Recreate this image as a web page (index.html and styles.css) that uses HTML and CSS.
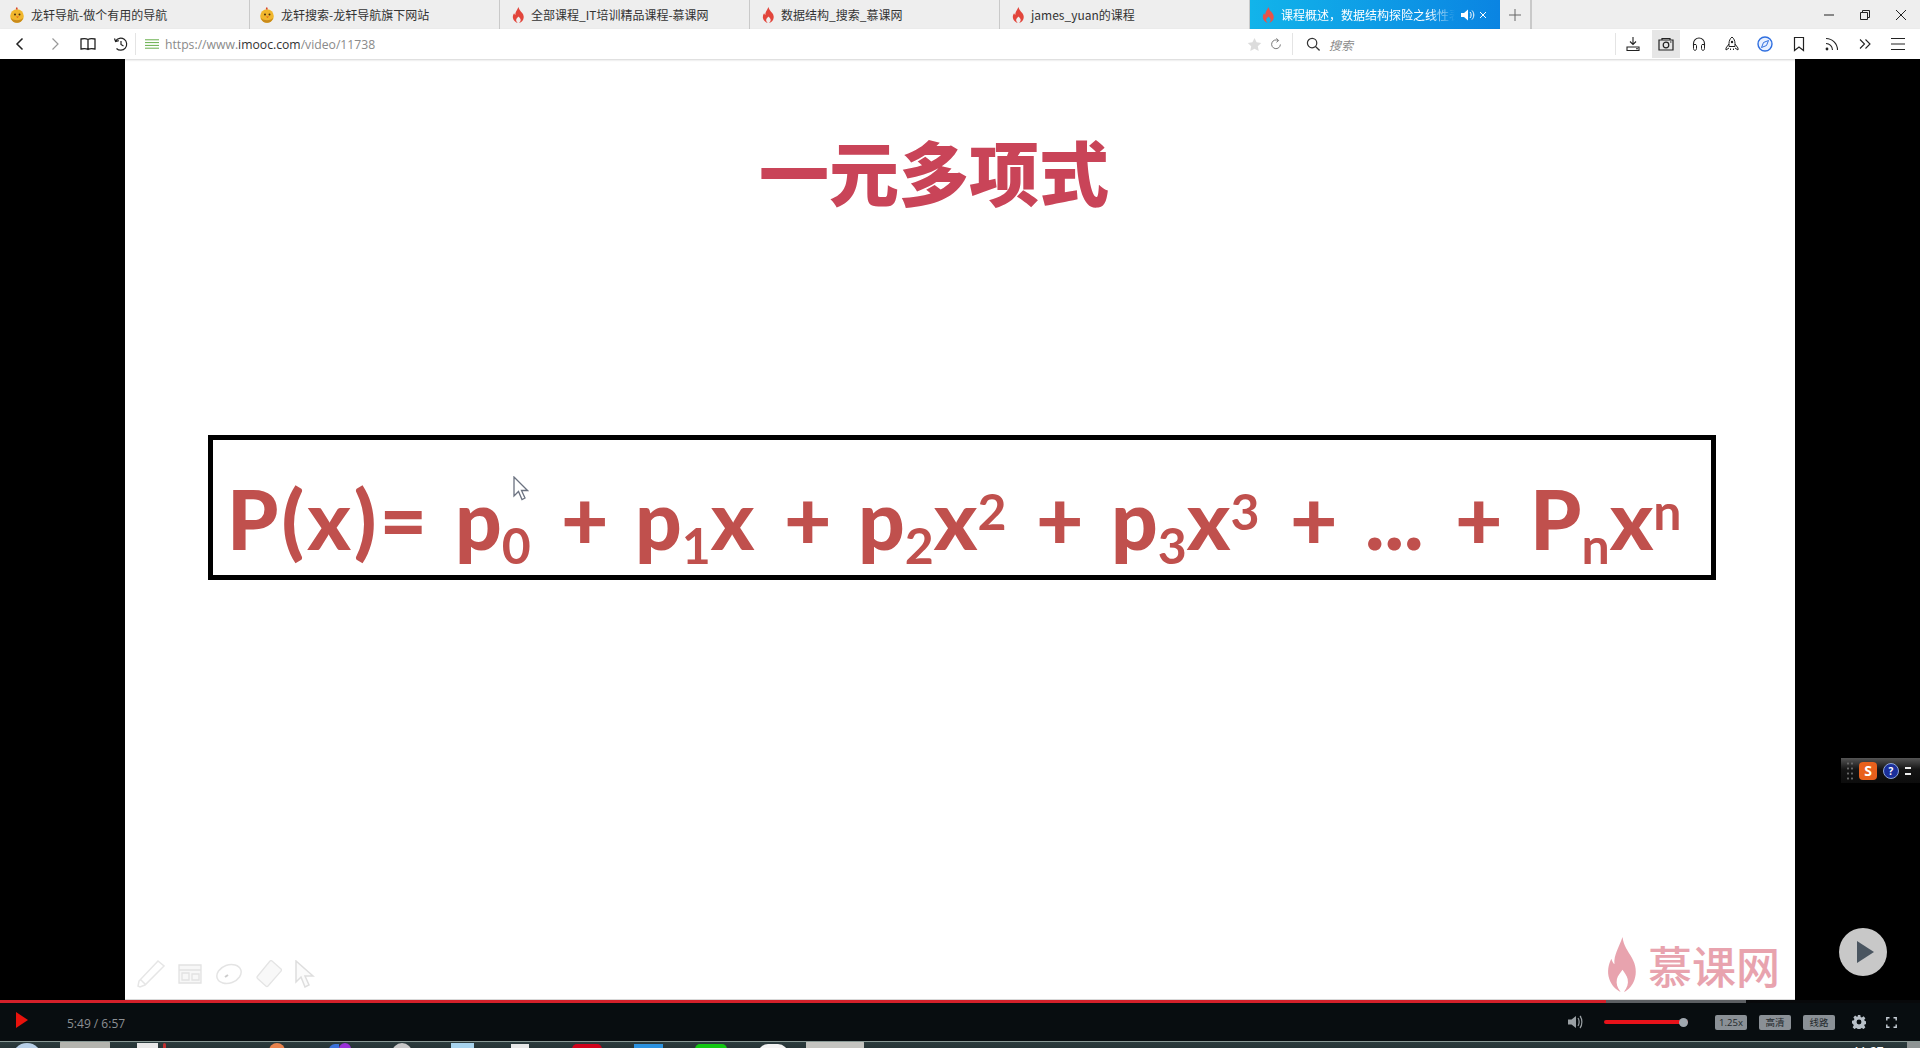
FILE: index.html
```html
<!DOCTYPE html>
<html lang="zh">
<head>
<meta charset="utf-8">
<title>课程概述</title>
<link rel="stylesheet" href="styles.css">
</head>
<body>
<svg class="defs" width="0" height="0">
  <symbol id="flame" viewBox="0 0 16 20" preserveAspectRatio="none"><path fill-rule="evenodd" d="M8 0c.6 3.4 2.6 5 4.6 7.6 1.9 2.500 2.400 5.400 1.200 7.900-.9 2-2.900 3.700-5.100 4.500 1.500-1.500 2.300-3 1.800-4.700-.4-1.300-1.500-2.200-2.500-3.400-1 1.200-2.300 2.100-2.700 3.400-.5 1.700.2 3.200 1.800 4.700-2.400-.8-4.500-2.500-5.500-4.700-1.200-2.700-.4-5.300 1-7.400.4 1 .8 1.600 1.500 2C3.700 6.500 6.200 4 8 0z"/></symbol>
  <symbol id="chick" viewBox="0 0 16 16"><circle cx="8" cy="9" r="6.800" fill="#f0b62c"/><path d="M1.800 10.500c2 3.500 10.400 3.500 12.400 0-1 4-3.500 5.300-6.200 5.300s-5.200-1.300-6.200-5.300z" fill="#c98a1a"/><path d="M7 2.500c-.4-1.200.2-2 1-2.500 .2.700 1 1 .6 2.500z" fill="#d8452a"/><circle cx="6" cy="7.500" r="1" fill="#4a3010"/><circle cx="10.500" cy="7.500" r="1" fill="#4a3010"/><path d="M7 9.500h3l-1.500 1.600z" fill="#e2611c"/></symbol>
</svg>

<header class="tabs">
  <div class="tab"><svg class="tab-ico"><use href="#chick"/></svg><span class="tab-text">龙轩导航-做个有用的导航</span></div>
  <div class="tab"><svg class="tab-ico"><use href="#chick"/></svg><span class="tab-text">龙轩搜索-龙轩导航旗下网站</span></div>
  <div class="tab"><svg class="flame-ico"><use href="#flame"/></svg><span class="tab-text">全部课程_IT培训精品课程-慕课网</span></div>
  <div class="tab"><svg class="flame-ico"><use href="#flame"/></svg><span class="tab-text">数据结构_搜索_慕课网</span></div>
  <div class="tab"><svg class="flame-ico"><use href="#flame"/></svg><span class="tab-text">james_yuan的课程</span></div>
  <div class="tab tab-active">
    <svg class="flame-active"><use href="#flame"/></svg>
    <span class="tab-text active-text">课程概述，数据结构探险之线性表</span>
    <svg class="sound" viewBox="0 0 14 12"><path d="M0 4h3l4-3.500v11L3 8H0z" fill="#fff"/><path d="M9 3c1.500 1.500 1.500 4.500 0 6M11 1.500c2.400 2.500 2.400 6.500 0 9" stroke="#fff" fill="none"/></svg>
    <svg class="tab-close" viewBox="0 0 8 8"><path d="M1 1l6 6M7 1L1 7" stroke="#fff" fill="none"/></svg>
  </div>
  <div class="tab-new"><svg viewBox="0 0 12 12"><path d="M6 0v12M0 6h12" stroke="#666" fill="none"/></svg></div>
  <div class="win">
    <svg viewBox="0 0 12 12"><path d="M1 6h10" stroke="#222" fill="none"/></svg>
    <svg viewBox="0 0 12 12"><path d="M1.500 3.500h7v7h-7zM3.500 3.500v-2h7v7h-2" stroke="#222" fill="none"/></svg>
    <svg viewBox="0 0 12 12"><path d="M1 1l10 10M11 1L1 11" stroke="#222" fill="none"/></svg>
  </div>
</header>

<nav class="nav">
  <svg class="nav-ico back" viewBox="0 0 16 16"><path d="M10.500 2.500L5 8l5.500 5.500" stroke="#222" stroke-width="1.500" fill="none"/></svg>
  <svg class="nav-ico fwd" viewBox="0 0 16 16"><path d="M5.500 2.500L11 8l-5.500 5.500" stroke="#999" stroke-width="1.200" fill="none"/></svg>
  <svg class="nav-ico book" viewBox="0 0 16 16"><path d="M8 3.500C6.500 2.500 3 2.500 1 3v10c2-.5 5.500-.5 7 .5 1.500-1 5-1 7-.5V3c-2-.5-5.500-.5-7 .5zM8 3.500v10" stroke="#222" stroke-width="1.300" fill="none"/></svg>
  <svg class="nav-ico hist" viewBox="0 0 16 16"><path d="M2.600 5A6 6 0 1 1 3.500 12.500M1.500 2.500L2.600 5.500 5.800 4.600M8 5v3.500l2.500 1.500" stroke="#222" stroke-width="1.200" fill="none"/></svg>
  <span class="vsep sep-a"></span>
  <svg class="nav-ico lines" viewBox="0 0 15 12"><path d="M0 1.500h15M0 4.500h15M0 7.500h15M0 10.500h15" stroke="#5aa83c" fill="none"/></svg>
  <div class="url">https://www.<b class="url-host">imooc.com</b>/video/11738</div>
  <svg class="nav-ico star" viewBox="0 0 16 16"><path d="M8 1l2.200 4.700 5 .6-3.700 3.500 1 5.100L8 12.400 3.500 14.900l1-5.100L.8 6.300l5-.6z" fill="#dcdcdc"/></svg>
  <svg class="nav-ico reload" viewBox="0 0 16 16"><path d="M13 8.500A5 5 0 1 1 10.500 4M8.500 1.500l2.500 2.500-2.500 2" stroke="#666" fill="none"/></svg>
  <span class="vsep sep-b"></span>
  <svg class="nav-ico search" viewBox="0 0 16 16"><circle cx="6.500" cy="6.500" r="5" stroke="#333" stroke-width="1.300" fill="none"/><path d="M10 10l4.500 4.500" stroke="#333" stroke-width="1.500"/></svg>
  <span class="search-text">搜索</span>
  <span class="vsep sep-c"></span>
  <div class="tools">
    <span class="tool"><svg viewBox="0 0 16 16"><path d="M8 1v7M5 5.500L8 8.500l3-3M2 11h12v3.500H2zM11 12.800h2" stroke="#222" stroke-width="1.100" fill="none"/></svg></span>
    <span class="tool tool-on"><svg viewBox="0 0 16 16"><path d="M1 4h14v10H1zM4 4V2.500h8V4" stroke="#222" stroke-width="1.200" fill="none"/><circle cx="8" cy="9" r="2.800" stroke="#222" stroke-width="1.200" fill="none"/><path d="M12 6h1.500" stroke="#222"/></svg></span>
    <span class="tool"><svg viewBox="0 0 16 16"><path d="M2.500 10V7.500a5.500 5.500 0 0 1 11 0V10" stroke="#222" stroke-width="1.100" fill="none"/><path d="M2.500 9.500C2.500 8 5.500 8 5.500 9.500v3C5.500 15 2.500 15 2.500 12.500zM10.500 9.500c0-1.500 3-1.500 3 0v3c0 2.500-3 2.500-3 0z" stroke="#222" fill="none"/></svg></span>
    <span class="tool"><svg viewBox="0 0 16 16"><path d="M8 1c2 1.500 3 4 3 6.500v3H5v-3C5 5 6 2.500 8 1zM5 8l-3 4v2l3-2M11 8l3 4v2l-3-2M6.500 12.500v1.500M9.500 12.500v1.500" stroke="#222" fill="none"/><circle cx="8" cy="6" r="1.200" fill="#222"/></svg></span>
    <span class="tool"><svg viewBox="0 0 16 16"><circle cx="8" cy="8" r="7" stroke="#2f6fe0" stroke-width="1.400" fill="#e8f0ff"/><path d="M11.500 4.500L9.500 9.500 4.500 11.500 6.500 6.500z" stroke="#2f6fe0" fill="none"/></svg></span>
    <span class="tool"><svg viewBox="0 0 16 16"><path d="M3.500 1.500h9v13L8 11l-4.500 3.500z" stroke="#222" stroke-width="1.200" fill="none"/></svg></span>
    <span class="tool"><svg viewBox="0 0 16 16"><circle cx="3" cy="13" r="1.400" fill="#222"/><path d="M2 7.500A6.500 6.500 0 0 1 8.500 14M2 2.500A11.500 11.500 0 0 1 13.500 14" stroke="#222" stroke-width="1.100" fill="none"/></svg></span>
    <span class="tool"><svg viewBox="0 0 16 16"><path d="M3 3.500L7.500 8 3 12.500M8.500 3.500L13 8l-4.500 4.500" stroke="#222" stroke-width="1.100" fill="none"/></svg></span>
    <span class="tool"><svg viewBox="0 0 16 16"><path d="M1 2.500h14M1 8h14M1 13.500h14" stroke="#222" stroke-width="1.200" fill="none"/></svg></span>
  </div>
</nav>

<main class="stage">
  <section class="slide">
    <h1 class="title">一元多项式</h1>
    <div class="formula">
      <span class="lhs">P(x)=</span>
      <span>p<sub>0</sub></span>
      <span>+</span>
      <span>p<sub>1</sub>x</span>
      <span>+</span>
      <span>p<sub>2</sub>x<sup>2</sup></span>
      <span>+</span>
      <span>p<sub>3</sub>x<sup>3</sup></span>
      <span>+</span>
      <span>...</span>
      <span>+</span>
      <span>P<sub>n</sub>x<sup>n</sup></span>
    </div>
    <svg class="cursor" viewBox="0 0 16 25"><path d="M1 1v19l4.500-4.500 3.500 8 3-1.500-3.500-7.500h6z" fill="#fff" stroke="#6b7280" stroke-width="1.300"/></svg>
    <div class="pens">
      <svg class="pen-a" viewBox="0 0 28 30"><path d="M21 2l6 5L8 26l-5 2-2-1 1-5zM4 21l5 5" stroke="#e6e6e6" stroke-width="1.500" fill="none"/></svg>
      <svg class="pen-b" viewBox="0 0 24 20"><path d="M1 1h22v18H1zM1 6h22M4 9h7v7H4zM14 10h7v6h-7z" stroke="#e2e2e2" stroke-width="1.300" fill="#f7f7f7"/></svg>
      <svg class="pen-c" viewBox="0 0 28 22"><ellipse cx="14" cy="11" rx="12.500" ry="9" transform="rotate(-20 14 11)" stroke="#e4e4e4" stroke-width="1.500" fill="none"/><path d="M10 14l3-2" stroke="#ccc" stroke-width="2"/></svg>
      <svg class="pen-d" viewBox="0 0 26 28"><path d="M16 1l9 8c.6.6.6 1.500 0 2.200L12 26c-.6.700-1.500.7-2.200 0L1.500 18.500c-.7-.7-.7-1.600 0-2.300L14 1c.6-.5 1.400-.5 2 0z" stroke="#e4e4e4" stroke-width="1.300" fill="#f8f8f8"/></svg>
      <svg class="pen-e" viewBox="0 0 20 28"><path d="M1 1v21l5-5 4 10 4-2-4-9h8z" stroke="#dedede" stroke-width="1.500" fill="#fbfbfb"/></svg>
    </div>
    <div class="brand">
      <svg class="brand-flame"><use href="#flame"/></svg>
      <span class="brand-text">慕课网</span>
    </div>
  </section>
  <div class="bigplay"><svg viewBox="0 0 48 48"><circle cx="24" cy="24" r="24" fill="#c8c8c8"/><path d="M18 13l17 11-17 11z" fill="#4a5560"/></svg></div>
  <div class="ime">
    <span class="ime-grip"></span>
    <span class="ime-s">S</span>
    <span class="ime-q">?</span>
    <span class="ime-more"></span>
  </div>
</main>

<div class="progress">
  <div class="played"></div>
  <div class="buffered"></div>
</div>
<footer class="controls">
  <svg class="ctl-play" viewBox="0 0 12 16"><path d="M0 0l12 8-12 8z" fill="#e8120c"/></svg>
  <span class="time">5:49 / 6:57</span>
  <svg class="ctl-vol" viewBox="0 0 15 14"><path d="M0 4.500h3.500L8 1v12L3.500 9.500H0z" fill="#9aa0a4"/><path d="M10 3c1.500 2 1.500 6 0 8M12 1c2.500 3 2.500 9 0 12" stroke="#9aa0a4" stroke-width="1.200" fill="none"/></svg>
  <div class="vol"><span class="vol-knob"></span></div>
  <span class="chip chip-a">1.25x</span>
  <span class="chip">高清</span>
  <span class="chip">线路</span>
  <svg class="ctl-gear" viewBox="0 0 16 16"><path fill-rule="evenodd" fill="#b8c0c8" d="M6.500 0h3l.4 2.200 1.400.6 1.900-1.300 2.100 2.100-1.300 1.900.6 1.400 2.200.4v3l-2.200.4-.6 1.400 1.300 1.900-2.100 2.100-1.900-1.300-1.400.6-.4 2.200h-3l-.4-2.200-1.400-.6-1.900 1.300-2.100-2.100 1.300-1.900-.6-1.400L0 9.500v-3l2.200-.4.6-1.400L1.500 2.800l2.100-2.100 1.900 1.300 1.400-.6zM8 5.200a2.800 2.800 0 1 0 0 5.600 2.800 2.800 0 0 0 0-5.600z"/></svg>
  <svg class="ctl-full" viewBox="0 0 11 11"><path d="M.8 3.500V.8h2.700M7.500.8h2.700v2.700M10.200 7.500v2.700H7.500M3.500 10.200H.8V7.500" stroke="#c8d0d8" stroke-width="1.400" fill="none"/></svg>
</footer>
<div class="taskbar">
  <span class="tb tb-orb"></span>
  <span class="tb tb-btn"></span>
  <span class="tb tb-doc"></span>
  <span class="tb tb-red"></span>
  <span class="tb tb-orange"></span>
  <span class="tb tb-blue"></span>
  <span class="tb tb-purple"></span>
  <span class="tb tb-grey"></span>
  <span class="tb tb-sky"></span>
  <span class="tb tb-paper"></span>
  <span class="tb tb-crimson"></span>
  <span class="tb tb-azure"></span>
  <span class="tb tb-green"></span>
  <span class="tb tb-white"></span>
  <span class="tb tb-active"></span>
  <span class="tb-clock">11:27</span>
  <span class="tb tb-show"></span>
</div>
</body>
</html>
```
FILE: styles.css
```css
* { box-sizing: border-box; }
html, body { margin: 0; height: 100%; }
body {
  width: 1920px; height: 1048px; overflow: hidden; background: #000;
  display: flex; flex-direction: column;
  font-family: "Open Sans", "Noto Sans CJK SC", sans-serif;
}
.defs { position: absolute; }
svg { display: block; flex: none; }

/* tab strip */
.tabs { height: 29px; flex: none; display: flex; align-items: stretch; background: #eeeeee; }
.tab { width: 250px; flex: none; display: flex; align-items: center; padding-left: 9px; border-right: 1px solid #c9c9c9; }
.tab-ico { width: 16px; height: 16px; margin-right: 6px; }
.flame-ico { fill: #e2463c; width: 13px; height: 16px; margin-left: 3px; margin-right: 6px; }
.flame-active { fill: #e8534a; width: 13px; height: 16px; margin-left: 3px; margin-right: 6px; }
.tab-text { font: 12px/18px "Noto Sans CJK SC", sans-serif; color: #333; white-space: nowrap; }
.tab-active { background: linear-gradient(90deg, #12b4ea, #0a84e2); border-right: 0; }
.active-text {
  color: #fff; width: 174px; flex: none; overflow: hidden;
  -webkit-mask-image: linear-gradient(90deg, #000 85%, transparent);
  mask-image: linear-gradient(90deg, #000 85%, transparent);
}
.sound { width: 14px; height: 12px; margin-left: 6px; }
.tab-close { width: 8px; height: 8px; margin-left: 4px; }
.tab-new { width: 32px; flex: none; display: flex; align-items: center; justify-content: center; border-right: 2px solid #c9c9c9; }
.tab-new svg { width: 12px; height: 12px; }
.win { margin-left: auto; display: flex; align-items: center; gap: 24px; padding-right: 13px; }
.win svg { width: 12px; height: 12px; }

/* address bar */
.nav { height: 30px; flex: none; display: flex; align-items: center; background: #fff; box-shadow: 0 1px 2px rgba(0,0,0,.18); position: relative; z-index: 2; }
.nav-ico { width: 16px; height: 16px; }
.back { margin-left: 12px; }
.fwd { margin-left: 19px; }
.book { margin-left: 17px; }
.hist { margin-left: 17px; }
.vsep { width: 1px; height: 22px; background: #e4e4e4; flex: none; }
.sep-a { margin-left: 6px; }
.lines { width: 14px; height: 12px; margin-left: 9px; }
.url { margin-left: 6px; width: 1082px; font-size: 12.200px; color: #8a8a8a; white-space: nowrap; }
.url-host { font-weight: 400; color: #333; }
.star { width: 15px; height: 15px; }
.reload { width: 14px; height: 14px; margin-left: 7px; }
.sep-b { margin-left: 9px; }
.search { width: 15px; height: 15px; margin-left: 13px; }
.search-text { margin-left: 8px; width: 286px; font: italic 12px "Noto Sans CJK SC", sans-serif; color: #8a8a8a; }
.tools { display: flex; align-items: center; height: 30px; }
.tool { width: 33.200px; height: 28px; display: flex; align-items: center; justify-content: center; flex: none; }
.tool svg { width: 16px; height: 16px; }
.tool-on { background: #e6e6e6; width: 28px; margin: 0 2.600px; }

/* video area */
.stage { height: 941px; flex: none; position: relative; background: #000; padding: 0 125px; }
.slide { height: 100%; background: #fff; position: relative; display: flex; flex-direction: column; border-bottom: 1px solid #d8d8d8; }
.title {
  margin: 77px 0 0 634px; font: 900 70px/70px "Noto Sans CJK SC", sans-serif; color: #c94458;
  white-space: nowrap; filter: blur(.5px);
}
.formula {
  margin: 229px 0 0 83px; width: 1508px; height: 145px; border: 5px solid #000; padding: 33px 0 0 14px;
  display: grid; grid-template-columns: 228px 106px 74px 149px 74px 178px 75px 179px 75px 90px 75px 150px;
  align-items: baseline;
  font: 900 82px/90px Lato, "Open Sans", sans-serif; color: #c0504d; white-space: nowrap;
  filter: blur(.4px);
}
.lhs { letter-spacing: 3px; }
.formula sub, .formula sup { font-size: 50px; line-height: 0; font-weight: 700; }
.formula sub { vertical-align: -14px; }
.formula sup { vertical-align: 20px; }
.cursor { position: absolute; left: 388px; top: 417px; width: 16px; height: 25px; }
.pens { position: absolute; left: 12px; bottom: 10px; display: flex; align-items: center; gap: 13px; }
.pen-a { width: 28px; height: 30px; }
.pen-b { width: 24px; height: 20px; }
.pen-c { width: 28px; height: 22px; }
.pen-d { width: 26px; height: 28px; }
.pen-e { width: 20px; height: 28px; }
.brand { position: absolute; right: 15px; bottom: 7px; display: flex; align-items: center; gap: 9px; color: #e8a3ae; }
.brand-flame { width: 33px; height: 55px; fill: #e8a3ae; }
.brand-text { font: 500 44px/1 "Noto Sans CJK SC", sans-serif; }
.bigplay { position: absolute; left: 1839px; top: 869px; }
.bigplay svg { width: 48px; height: 48px; }
.ime { position: absolute; right: 0; top: 699px; width: 79px; height: 25px; background: linear-gradient(#555, #151515 45%, #0c0c0c); display: flex; align-items: center; }
.ime-grip { width: 8px; height: 19px; margin-left: 5px; background: radial-gradient(circle, #666 1px, transparent 1.200px) 0 0 / 4px 5px; }
.ime-s { width: 18px; height: 18px; margin-left: 5px; border-radius: 4px; background: #e8601c; color: #fff; font: 700 14px/18px "Open Sans", sans-serif; text-align: center; }
.ime-q { width: 16px; height: 16px; margin-left: 6px; border-radius: 50%; background: #1a2f9a; border: 1px solid #8fa6d8; color: #fff; font: 700 10px/14px "Open Sans", sans-serif; text-align: center; }
.ime-more { width: 6px; height: 8px; margin-left: 6px; border-top: 2px solid #eee; border-bottom: 2px solid #eee; }

/* player */
.progress { height: 3px; flex: none; background: #08090b; display: flex; }
.played { width: 1606px; background: #d3202a; }
.buffered { width: 140px; background: #5c5f63; }
.controls { height: 38px; flex: none; background: #080d10; display: flex; align-items: center; color: #a0a4a8; }
.ctl-play { width: 12px; height: 16px; margin-left: 16px; margin-top: -5px; }
.time { margin-left: 39px; width: 1501px; font-size: 12px; line-height: 16px; white-space: nowrap; color: #8c9094; margin-top: 4px; }
.ctl-vol { width: 15px; height: 14px; margin-top: -1px; }
.vol { width: 84px; height: 4px; margin-left: 21px; background: #e8121a; border-radius: 2px; position: relative; }
.vol-knob { position: absolute; right: 0; top: -2.500px; width: 9px; height: 9px; border-radius: 50%; background: #a0a8b0; }
.chip { width: 32px; height: 15px; margin-left: 12px; background: #8a9096; border-radius: 2px; color: #22282c; font: 9.500px/15px "Noto Sans CJK SC", sans-serif; text-align: center; }
.chip-a { margin-left: 27px; font-family: "Open Sans", sans-serif; }
.ctl-gear { width: 14px; height: 14px; margin-left: 17px; }
.ctl-full { width: 11px; height: 11px; margin-left: 20px; }

/* desktop taskbar */
.taskbar { height: 7px; flex: none; background: linear-gradient(#2c3c3e, #263436); border-top: 1px solid #8a9a96; display: flex; align-items: flex-start; position: relative; overflow: hidden; }
.tb { height: 14px; flex: none; border-radius: 5px 5px 0 0; }
.tb-orb { margin-left: 12px; width: 30px; background: #b8d0e8; border-radius: 50%; height: 30px; margin-top: 1px; }
.tb-btn { margin-left: 18px; width: 50px; margin-top: -1px; background: #b4b4ae; border-radius: 2px 2px 0 0; }
.tb-doc { margin-left: 27px; width: 21px; background: #e8e8e8; margin-top: 1px; border-radius: 0; }
.tb-red { margin-left: 5px; width: 3px; background: #c03030; margin-top: 1px; }
.tb-orange { margin-left: 103px; width: 16px; margin-top: 1px; background: #e8824c; border-radius: 8px 8px 0 0; }
.tb-blue { margin-left: 44px; width: 10px; margin-top: 2px; background: #3a70d8; border-radius: 6px 0 0 0; }
.tb-purple { width: 12px; margin-top: 1px; background: #9a30d8; border-radius: 6px 6px 0 0; }
.tb-grey { margin-left: 41px; width: 20px; margin-top: 1px; background: #c8c8c8; border-radius: 10px 10px 0 0; }
.tb-sky { margin-left: 39px; width: 23px; margin-top: 1px; background: #a8d4ee; border-radius: 0; }
.tb-paper { margin-left: 37px; width: 18px; margin-top: 2px; background: #e8e8e8; border-radius: 0; }
.tb-crimson { margin-left: 43px; width: 30px; margin-top: 2px; background: #d0021b; }
.tb-azure { margin-left: 32px; width: 29px; margin-top: 2px; background: #2a92e0; border-radius: 0; }
.tb-green { margin-left: 32px; width: 32px; margin-top: 2px; background: #12c812; }
.tb-white { margin-left: 31px; width: 30px; margin-top: 2px; background: #f4f4f4; border-radius: 10px 10px 0 0; }
.tb-active { margin-left: 18px; width: 58px; margin-top: -1px; background: #c4c4c0; border-radius: 2px 2px 0 0; }
.tb-clock { position: absolute; left: 1853px; top: 3px; font: 12px/14px "Open Sans", sans-serif; color: #fff; }
.tb-show { margin-left: auto; width: 13px; margin-top: 0; background: #8e9494; border-radius: 0; }
```
